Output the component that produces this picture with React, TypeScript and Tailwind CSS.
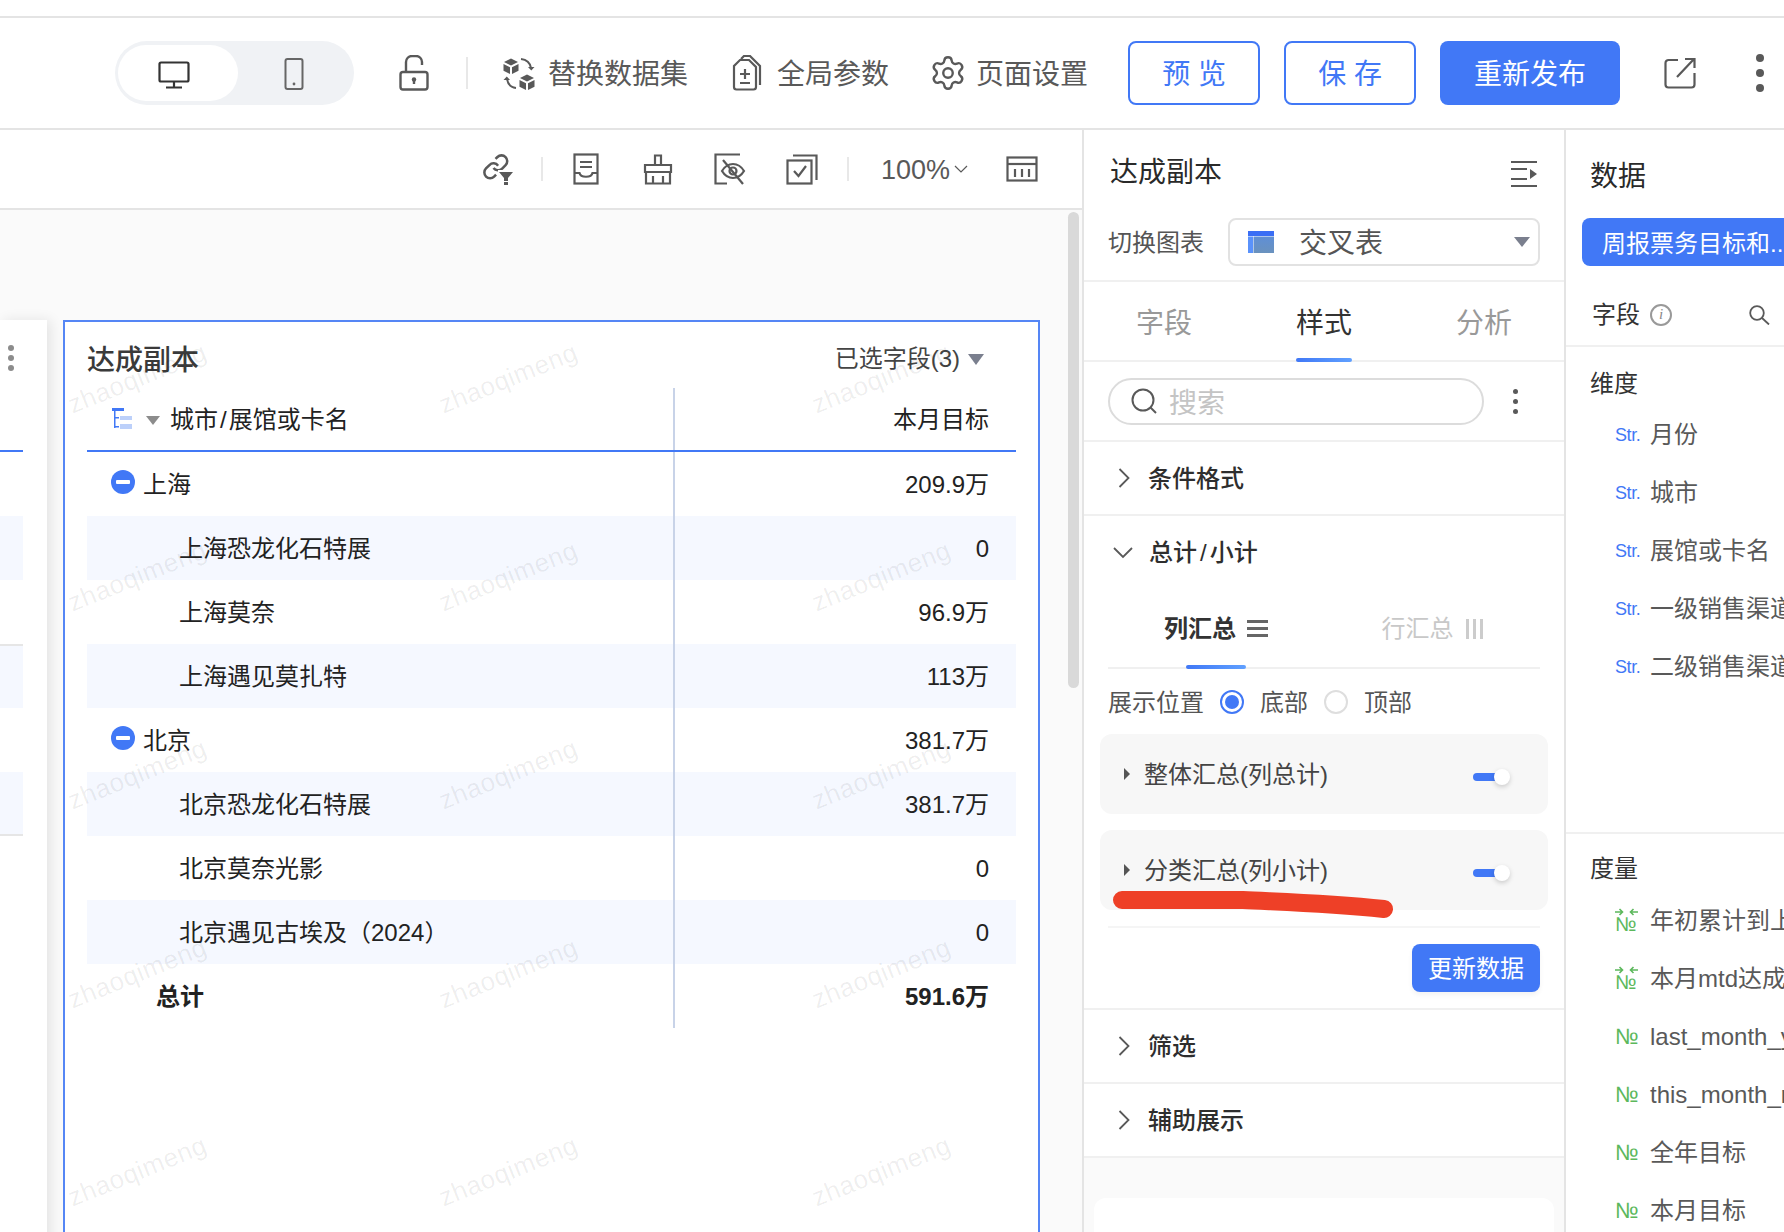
import { Settings } from "lucide-react";

const GRAY = "#595959";
const BLUE = "#4178f6";

const IconBase = ({ w, h, children, color = GRAY, sw = 2 }: { w: number; h: number; children: React.ReactNode; color?: string; sw?: number }) => (
  <svg width={w} height={h} viewBox={`0 0 ${w} ${h}`} fill="none" stroke={color} strokeWidth={sw} className="shrink-0">
    {children}
  </svg>
);

const DesktopIcon = () => (
  <IconBase w={32} h={28} color="#333" sw={2.2}>
    <rect x="1.5" y="1.5" width="29" height="19" rx="1.5" />
    <path d="M16 21v5M8 26.5h16" />
  </IconBase>
);

const MobileIcon = () => (
  <IconBase w={20} h={32} color="#666">
    <rect x="1.5" y="1" width="17" height="30" rx="2" />
    <circle cx="10" cy="26" r="1.4" fill="#666" stroke="none" />
  </IconBase>
);

const LockIcon = () => (
  <IconBase w={30} h={36} sw={2.4}>
    <path d="M7 17V7a6 6 0 0 1 6-6h4a6 6 0 0 1 6 6v3" />
    <rect x="1.5" y="17" width="27" height="17.5" rx="2.5" />
    <circle cx="15" cy="24.5" r="2.2" fill={GRAY} stroke="none" />
    <path d="M15 25v4" />
  </IconBase>
);

const SwapIcon = () => (
  <IconBase w={34} h={34}>
    <path d="M2 6l7-3.5L16 6l-7 3.5z" fill={GRAY} stroke="none" />
    <path d="M1.5 8l6.5 3.2V18l-6.5-3.2zM16.5 8L10 11.2V18l6.5-3.2z" fill={GRAY} stroke="none" />
    <path d="M19 3c5 .5 9 3.500 10 9" />
    <path d="M26 11l3.300 3.500L32.500 11" fill={GRAY} stroke="none" />
    <path d="M18 22l7-3.500L32 22l-7 3.500z" fill={GRAY} stroke="none" />
    <path d="M17.500 24l6.500 3.200V34l-6.500-3.200zM32.500 24L26 27.200V34l6.500-3.200z" fill={GRAY} stroke="none" />
    <path d="M14 32c-5-.5-8-3.500-9-9" />
    <path d="M1.500 24l3.300-3.500L8 24" fill={GRAY} stroke="none" />
  </IconBase>
);

const ParamIcon = () => (
  <IconBase w={30} h={36} sw={2.2}>
    <path d="M8 5h9l7 7v20a2.500 2.500 0 0 1-2.500 2.500h-17A2.500 2.500 0 0 1 2 32V11z" />
    <path d="M9 4l3-3h6l10 10v19" />
    <path d="M13 14v10M8 19h10M8 28h10" />
  </IconBase>
);

const ShareIcon = () => (
  <IconBase w={32} h={32} sw={2.2}>
    <path d="M14 3H4.500A3 3 0 0 0 1.500 6v21.500a3 3 0 0 0 3 3h23a3 3 0 0 0 3-3V16" />
    <path d="M13 20L30 2M21 2h9.500v9" />
  </IconBase>
);

const LinkFunnelIcon = () => (
  <svg width={31} height={31} viewBox="0 0 31 31" fill="none" stroke={GRAY} strokeWidth={2.2} className="shrink-0">
    <g transform="translate(-1 -1) scale(1.15)">
      <path d="M10 13a5 5 0 0 0 7.540.540l3-3a5 5 0 0 0-7.070-7.070l-1.720 1.710" />
      <path d="M14 11a5 5 0 0 0-7.540-.540l-3 3a5 5 0 0 0 7.070 7.070l1.710-1.710" />
    </g>
    <path d="M15 16h16v3h-16z" fill="#fff" stroke="none" />
    <path d="M16 18h14l-5 6v3h-4v-3z" fill={GRAY} stroke="none" />
    <path d="M21 28h4v3h-4z" fill={GRAY} stroke="none" />
  </svg>
);

const ReportIcon = () => (
  <IconBase w={26} h={32} sw={2.2}>
    <rect x="1.500" y="1.500" width="23" height="29" />
    <path d="M7 9h12M7 14h12M1.500 20h5c1 5 12 5 13 0h5" />
  </IconBase>
);

const BrushIcon = () => (
  <IconBase w={30} h={31} sw={2.2}>
    <path d="M12 11V1.500h6V11M2 11h26v7H2zM3 18v11.500h24V18M10 22v7.500M20 22v7.500" />
  </IconBase>
);

const EyeDocIcon = () => (
  <IconBase w={32} h={32} sw={2.2}>
    <path d="M26 1.500H1.500v29H13" />
    <path d="M8 18c3-5 7-7 11-7s8 2 11 7c-3 5-7 7-11 7s-8-2-11-7z" />
    <circle cx="19" cy="18" r="3.500" />
    <path d="M9 7l20 24" />
  </IconBase>
);

const CheckCopyIcon = () => (
  <IconBase w={32} h={31} sw={2.2}>
    <rect x="1.500" y="6.500" width="24" height="23" />
    <path d="M7 1.500h23.500V26" />
    <path d="M8 17l4.500 5L20 12" />
  </IconBase>
);

const TableIcon = () => (
  <IconBase w={32} h={26} sw={2.2}>
    <rect x="1.500" y="1.500" width="29" height="23" />
    <path d="M1.500 8h29" />
    <path d="M9 13v8M16 13v8M23 13v8" />
  </IconBase>
);

const CollapseIcon = () => (
  <IconBase w={26} h={26} sw={1.8}>
    <path d="M0 1h26M0 8h16M0 18h16M0 25h26" />
    <path d="M19 8l7 5-7 5z" fill={GRAY} stroke="none" />
  </IconBase>
);

const TreeIcon = () => (
  <svg width={20} height={21} viewBox="0 0 20 21" className="-mt-[4px] shrink-0">
    <rect x="0" y="0" width="12" height="3" fill={BLUE} />
    <rect x="2" y="3" width="1.500" height="17" fill={BLUE} />
    <rect x="3" y="9" width="4" height="1.500" fill={BLUE} />
    <rect x="3" y="18" width="4" height="1.500" fill={BLUE} />
    <rect x="8" y="8" width="12" height="4" fill="#bcd0fa" />
    <rect x="8" y="16" width="12" height="5" fill="#bcd0fa" />
  </svg>
);

const MinusCircle = () => (
  <svg width={24} height={24} viewBox="0 0 24 24" className="-mt-[6px] shrink-0">
    <circle cx="12" cy="12" r="12" fill={BLUE} />
    <rect x="5" y="10" width="14" height="4" rx="1" fill="#fff" />
  </svg>
);

const CrossTableIcon = () => (
  <svg width={26} height={22} viewBox="0 0 26 22" className="shrink-0">
    <defs>
      <linearGradient id="ct" x1="0" y1="0" x2="0" y2="1">
        <stop offset="0" stopColor="#5f8fd6" />
        <stop offset="1" stopColor="#6a92be" />
      </linearGradient>
    </defs>
    <rect x="0" y="0" width="26" height="5" fill="#3a6ef5" />
    <rect x="5.500" y="5.500" width="20.500" height="16.500" fill="url(#ct)" />
    <rect x="0" y="5.500" width="5" height="16.500" fill="#5a92fb" />
  </svg>
);

const Caret = ({ w, h, color }: { w: number; h: number; color: string }) => (
  <svg width={w} height={h} viewBox="0 0 10 6" preserveAspectRatio="none" className="shrink-0">
    <path d="M0 0h10L5 6z" fill={color} />
  </svg>
);

const CaretRight = () => (
  <svg width={6} height={12} viewBox="0 0 6 12" className="shrink-0">
    <path d="M0 0l6 6-6 6z" fill="#555" />
  </svg>
);

const ChevronRight = () => (
  <svg width={12} height={20} viewBox="0 0 12 20" fill="none" stroke={GRAY} strokeWidth={1.800} className="shrink-0">
    <path d="M1.500 1l9 9-9 9" />
  </svg>
);

const ChevronDown = () => (
  <svg width={20} height={12} viewBox="0 0 20 12" fill="none" stroke={GRAY} strokeWidth={1.800} className="shrink-0">
    <path d="M1 1l9 9 9-9" />
  </svg>
);

const Dots = ({ size, gap, color }: { size: string; gap: string; color: string }) => (
  <div className={`flex flex-col ${gap}`}>
    <span className={`block rounded-full ${size} ${color}`} />
    <span className={`block rounded-full ${size} ${color}`} />
    <span className={`block rounded-full ${size} ${color}`} />
  </div>
);

const SearchGlyph = () => (
  <svg width={26} height={26} viewBox="0 0 26 26" fill="none" stroke={GRAY} strokeWidth={2} className="shrink-0">
    <circle cx="12" cy="12" r="10.500" />
    <path d="M19.500 19.500l5.500 5.500" />
  </svg>
);

const SmallSearch = () => (
  <svg width={21} height={20} viewBox="0 0 21 20" fill="none" stroke={GRAY} strokeWidth={1.800} className="shrink-0">
    <circle cx="8" cy="8" r="6.800" />
    <path d="M13 13l7 6.500" />
  </svg>
);

const Toggle = () => (
  <div className="ml-auto mt-[6px] mr-[38px] flex items-center">
    <span className="block h-2 w-[24px] rounded-l-full bg-[#4178f6]" />
    <span className="-ml-[3px] block h-4 w-4 rounded-full bg-white shadow-[0_2px_5px_rgba(0,0,0,0.18)]" />
  </div>
);

const Section = ({ title }: { title: string }) => (
  <div className="flex h-[74px] items-center border-b-2 border-[#f0f0f0] pl-[34px]">
    <ChevronRight />
    <span className="ml-[18px] mt-[2px] text-[24px] font-medium text-[#2e2e2e]">{title}</span>
  </div>
);

const SummaryCard = ({ label, children }: { label: string; children?: React.ReactNode }) => (
  <div className="relative flex h-[80px] w-[448px] items-center rounded-xl bg-[#f7f7f7] pl-[24px]">
    <CaretRight />
    <span className="ml-[14px] mt-[2px] text-[24px] text-[#444]">{label}</span>
    <Toggle />
    {children}
  </div>
);

const tableRows = [
  { name: "上海", value: "209.9万", level: 1 },
  { name: "上海恐龙化石特展", value: "0", level: 2, striped: true },
  { name: "上海莫奈", value: "96.9万", level: 2 },
  { name: "上海遇见莫扎特", value: "113万", level: 2, striped: true },
  { name: "北京", value: "381.7万", level: 1 },
  { name: "北京恐龙化石特展", value: "381.7万", level: 2, striped: true },
  { name: "北京莫奈光影", value: "0", level: 2 },
  { name: "北京遇见古埃及（2024）", value: "0", level: 2, striped: true },
  { name: "总计", value: "591.6万", level: 0 },
];

const TableRow = ({ row }: { row: (typeof tableRows)[number] }) => (
  <div className={`flex h-[64px] items-center ${row.striped ? "bg-[#f5f8ff]" : ""}`}>
    <div className="flex h-full w-[588px] items-center border-r-2 border-[#c8d3e8] pt-[2px]">
      {row.level === 1 && (
        <div className="flex items-center pl-[24px]">
          <MinusCircle />
          <span className="ml-[8px] text-[24px] text-[#222]">{row.name}</span>
        </div>
      )}
      {row.level === 2 && <span className="pl-[92px] text-[24px] text-[#222]">{row.name}</span>}
      {row.level === 0 && <span className="pl-[69px] text-[24px] font-bold text-[#222]">{row.name}</span>}
    </div>
    <div className={`flex-1 pr-[27px] pt-[2px] text-right text-[24px] text-[#222] ${row.level === 0 ? "font-bold" : ""}`}>{row.value}</div>
  </div>
);

const wmX = [-1, 370, 743];
const wmY = [15, 213, 411, 610, 808];

const Watermarks = () => (
  <div className="pointer-events-none absolute inset-0 overflow-hidden">
    {wmY.map((y) =>
      wmX.map((x) => (
        <span
          key={`${x}-${y}`}
          className="absolute origin-center -rotate-[22deg] whitespace-nowrap text-[26px] tracking-[0.5px] text-black/[0.07]"
          style={{ left: x, top: y + 22 }}
        >
          zhaoqimeng
        </span>
      )),
    )}
  </div>
);

const FieldRow = ({ type, name }: { type: "str" | "num" | "calc"; name: string }) => (
  <div className="flex h-[58px] items-center whitespace-nowrap pl-[49px] pt-[2px]">
    <div className="relative w-[35px] shrink-0">
      {type === "str" && <span className="text-[18px] tracking-[-0.4px] text-[#4178f6]">Str.</span>}
      {type === "num" && <span className="text-[22px] leading-[26px] tracking-[-0.5px] text-[#5cb85c]">№</span>}
      {type === "calc" && (
        <>
          <span className="relative top-[3px] text-[20px] leading-[26px] tracking-[-0.5px] text-[#5cb85c]">№</span>
          <svg width={23} height={8} viewBox="0 0 23 8" fill="none" stroke="#5cb85c" strokeWidth={1.600} className="absolute top-0 left-0">
            <path d="M0 4h7M4.500 1l3 3-3 3M23 4h-7M18.500 1l-3 3 3 3" />
          </svg>
        </>
      )}
    </div>
    <span className="text-[24px] text-[#595959]">{name}</span>
  </div>
);

export default function App() {
  return (
    <div className="h-[1232px] w-[1784px] overflow-hidden bg-white font-['Liberation_Sans','Noto_Sans_CJK_SC',sans-serif]">
      {/* top strip */}
      <div className="h-[18px] border-b-2 border-[#e4e4e4]" />

      {/* main header */}
      <div className="flex h-[112px] items-center border-b-2 border-[#e4e4e4] pl-[115px] text-[28px] text-[#595959]">
        <div className="flex h-[64px] w-[239px] items-center rounded-full bg-[#f0f2f5] pl-[3px]">
          <div className="flex h-[56px] w-[120px] items-center justify-center rounded-full bg-white pr-[8px] pt-[4px]">
            <DesktopIcon />
          </div>
          <div className="flex flex-1 items-center justify-center pr-[4px] pt-[2px]">
            <MobileIcon />
          </div>
        </div>
        <div className="ml-[45px]">
          <LockIcon />
        </div>
        <div className="ml-[37px] h-[32px] w-[2px] bg-[#e8e8e8]" />
        <div className="ml-[34px]">
          <SwapIcon />
        </div>
        <span className="ml-[12px] mt-[4px] whitespace-nowrap">替换数据集</span>
        <div className="ml-[44px]">
          <ParamIcon />
        </div>
        <span className="ml-[15px] mt-[4px] whitespace-nowrap">全局参数</span>
        <Settings size={38} strokeWidth={1.500} color={GRAY} className="ml-[40px] shrink-0" />
        <span className="ml-[9px] mt-[4px] whitespace-nowrap">页面设置</span>
        <button className="ml-[40px] h-[64px] w-[132px] rounded-lg border-2 border-[#4178f6] pt-[3px] text-[28px] text-[#4178f6]">预 览</button>
        <button className="ml-[24px] h-[64px] w-[132px] rounded-lg border-2 border-[#4178f6] pt-[3px] text-[28px] text-[#4178f6]">保 存</button>
        <button className="ml-[24px] h-[64px] w-[180px] rounded-lg bg-[#4178f6] pt-[3px] text-[28px] text-white">重新发布</button>
        <div className="ml-[44px]">
          <ShareIcon />
        </div>
        <div className="ml-[60px]">
          <Dots size="h-2 w-2" gap="gap-[7px]" color="bg-[#595959]" />
        </div>
      </div>

      <div className="flex h-[1102px]">
        {/* canvas */}
        <div className="flex w-[1082px] shrink-0 flex-col">
          <div className="flex h-[80px] shrink-0 items-center border-b-2 border-[#e4e4e4] pl-[483px] text-[#595959]">
            <LinkFunnelIcon />
            <div className="ml-[27px] h-[24px] w-[2px] bg-[#e8e8e8]" />
            <div className="ml-[30px]"><ReportIcon /></div>
            <div className="ml-[44px]"><BrushIcon /></div>
            <div className="ml-[41px]"><EyeDocIcon /></div>
            <div className="ml-[40px]"><CheckCopyIcon /></div>
            <div className="ml-[29px] h-[24px] w-[2px] bg-[#e8e8e8]" />
            <span className="ml-[32px] mt-[2px] w-[67px] whitespace-nowrap text-[27px]">100%</span>
            <svg width={14} height={8} viewBox="0 0 14 8" fill="none" stroke={GRAY} strokeWidth={1.200} className="ml-[6px] shrink-0">
              <path d="M1 1l6 6 6-6" />
            </svg>
            <div className="ml-[38px]"><TableIcon /></div>
          </div>

          <div className="relative flex min-h-0 flex-1 items-start overflow-hidden bg-[#fafafa] pt-[110px]">
            {/* neighbouring chart, cut off by the viewport */}
            <div className="h-[1100px] w-[47px] shrink-0 bg-white pt-[25px] shadow-[4px_0_12px_rgba(0,0,0,0.09)]">
              <div className="ml-[8px]">
                <Dots size="h-[6px] w-[6px]" gap="gap-[4px]" color="bg-[#8c8c8c]" />
              </div>
              <div className="mt-[79px] w-[23px]">
                <div className="h-[66px] border-t-2 border-[#4178f6]" />
                <div className="h-[64px] bg-[#f5f8ff]" />
                <div className="h-[64px]" />
                <div className="h-[64px] border-t-2 border-[#e6e6e6] bg-[#f5f8ff]" />
                <div className="h-[64px]" />
                <div className="h-[64px] border-b-2 border-[#e6e6e6] bg-[#f5f8ff]" />
              </div>
            </div>

            <div className="relative ml-[16px] h-[1100px] w-[977px] shrink-0 border-2 border-[#5586f5] bg-white pl-[22px] pr-[22px]">
              <div className="flex h-[66px] items-center justify-between pt-[8px]">
                <span className="mt-[4px] text-[28px] font-medium text-[#3a3a3a]">达成副本</span>
                <div className="flex items-center pr-[32px]">
                  <span className="text-[24px] text-[#444]">已选字段(3)</span>
                  <span className="ml-[8px]">
                    <Caret w={16} h={11} color="#7a7f8e" />
                  </span>
                </div>
              </div>
              <div className="flex h-[64px] items-center border-b-2 border-[#4178f6]">
                <div className="flex h-full w-[588px] items-center border-r-2 border-[#c8d3e8] pl-[25px] pt-[2px]">
                  <TreeIcon />
                  <span className="ml-[14px]">
                    <Caret w={14} h={9} color="#8c8c8c" />
                  </span>
                  <span className="ml-[10px] text-[24px] text-[#222]">
                    城市<span className="mx-[2px]">/</span>展馆或卡名
                  </span>
                </div>
                <div className="flex-1 pr-[27px] pt-[2px] text-right text-[24px] text-[#222]">本月目标</div>
              </div>
              {tableRows.map((row) => (
                <TableRow key={row.name} row={row} />
              ))}
              <Watermarks />
            </div>

            <div className="absolute right-[3px] top-[2px] h-[476px] w-[11px] rounded-full bg-[#d9d9d9]" />
          </div>
        </div>

        {/* chart settings panel */}
        <div className="flex w-[482px] shrink-0 flex-col border-l-2 border-[#e4e4e4]">
          <div className="h-[152px] shrink-0 border-b-2 border-[#f0f0f0] px-[24px]">
            <div className="mt-[24px] flex h-[34px] items-center justify-between pr-[3px]">
              <span className="ml-[2px] mt-[4px] text-[28px] text-[#2a2a2a]">达成副本</span>
              <span className="mt-[6px]"><CollapseIcon /></span>
            </div>
            <div className="mt-[30px] flex items-center">
              <span className="mt-[2px] text-[24px] text-[#555]">切换图表</span>
              <div className="ml-[24px] flex h-[48px] w-[312px] items-center rounded-lg border-2 border-[#e2e2e2] pl-[18px] pr-[8px]">
                <CrossTableIcon />
                <span className="ml-[25px] mt-[4px] text-[28px] leading-none text-[#555]">交叉表</span>
                <span className="ml-auto">
                  <Caret w={16} h={10} color="#7a7f8e" />
                </span>
              </div>
            </div>
          </div>

          <div className="flex h-[80px] shrink-0 border-b-2 border-[#f0f0f0] text-[28px]">
            <div className="flex flex-1 items-center justify-center pt-[6px] text-[#999]">字段</div>
            <div className="relative flex flex-1 items-center justify-center pt-[6px] text-[#333]">
              样式
              <span className="absolute -bottom-[2px] left-1/2 h-[4px] w-[56px] -translate-x-1/2 rounded-full bg-gradient-to-r from-[#4178f6] to-[#60a0ff]" />
            </div>
            <div className="flex flex-1 items-center justify-center pt-[6px] text-[#999]">分析</div>
          </div>

          <div className="flex h-[80px] shrink-0 items-center border-b-2 border-[#f0f0f0] pl-[24px]">
            <div className="flex h-[47px] w-[376px] items-center rounded-full border-2 border-[#dcdcdc] pl-[21px]">
              <SearchGlyph />
              <span className="ml-[12px] mt-[5px] text-[28px] text-[#c4c4c4]">搜索</span>
            </div>
            <div className="ml-[29px]">
              <Dots size="h-[5px] w-[5px]" gap="gap-[5px]" color="bg-[#595959]" />
            </div>
          </div>

          <Section title="条件格式" />

          <div className="shrink-0 border-b-2 border-[#f0f0f0]">
            <div className="flex h-[74px] items-center pl-[29px]">
              <ChevronDown />
              <span className="ml-[16px] text-[24px] font-medium text-[#2e2e2e]">
                总计<span className="mx-[3px]">/</span>小计
              </span>
            </div>
            <div className="ml-[24px] flex h-[79px] w-[432px] border-b-2 border-[#f0f0f0]">
              <div className="relative flex flex-1 items-center justify-center">
                <span className="text-[24px] font-bold text-[#333]">列汇总</span>
                <span className="ml-[11px] flex flex-col gap-[4px]">
                  <span className="block h-[3px] w-[21px] bg-[#666]" />
                  <span className="block h-[3px] w-[21px] bg-[#666]" />
                  <span className="block h-[3px] w-[21px] bg-[#666]" />
                </span>
                <span className="absolute -bottom-[2px] left-1/2 h-[4px] w-[60px] -translate-x-1/2 rounded-full bg-gradient-to-r from-[#4178f6] to-[#60a0ff]" />
              </div>
              <div className="flex flex-1 items-center justify-center">
                <span className="text-[24px] text-[#c8c8c8]">行汇总</span>
                <span className="ml-[12px] flex gap-[4px]">
                  <span className="block h-[20px] w-[3px] bg-[#ccc]" />
                  <span className="block h-[20px] w-[3px] bg-[#ccc]" />
                  <span className="block h-[20px] w-[3px] bg-[#ccc]" />
                </span>
              </div>
            </div>
            <div className="flex h-[65px] items-center pl-[24px] text-[24px] text-[#555]">
              <span className="mt-[2px]">展示位置</span>
              <span className="ml-[16px] flex h-[24px] w-[24px] items-center justify-center rounded-full border-2 border-[#4178f6]">
                <span className="block h-[14px] w-[14px] rounded-full bg-[#4178f6]" />
              </span>
              <span className="ml-[16px] mt-[2px]">底部</span>
              <span className="ml-[16px] block h-[24px] w-[24px] rounded-full border-2 border-[#dedede]" />
              <span className="ml-[16px] mt-[2px]">顶部</span>
            </div>
            <div className="ml-[16px] flex flex-col gap-[16px]">
              <SummaryCard label="整体汇总(列总计)" />
              <SummaryCard label="分类汇总(列小计)">
                <svg width={280} height={27} viewBox="0 0 280 27" fill="none" className="absolute left-[13px] top-[61px] overflow-visible">
                  <path d="M9 9L130 9C170 11 215 12 271 18" stroke="#ee4027" strokeWidth={18} strokeLinecap="round" />
                </svg>
              </SummaryCard>
            </div>
            <div className="ml-[24px] mt-[16px] w-[432px] border-t-2 border-[#f5f5f5]" />
            <div className="flex justify-end py-[16px] pr-[24px]">
              <button className="h-[48px] w-[128px] rounded-lg bg-[#4178f6] pt-[2px] text-[24px] text-white shadow-[0_3px_5px_rgba(0,0,0,0.05)]">更新数据</button>
            </div>
          </div>

          <Section title="筛选" />
          <Section title="辅助展示" />

          <div className="min-h-0 flex-1 bg-[#fafafa] px-[10px] pt-[40px]">
            <div className="h-full rounded-t-xl bg-white" />
          </div>
        </div>

        {/* data panel */}
        <div className="min-w-0 flex-1 overflow-hidden border-l-2 border-[#e4e4e4]">
          <div className="flex h-[88px] items-center pl-[24px] pt-[5px] text-[28px] text-[#2a2a2a]">数据</div>
          <div className="ml-[16px] flex h-[48px] w-[230px] items-center whitespace-nowrap rounded-l-lg bg-[#4178f6] pl-[20px] pt-[4px] text-[24px] text-white">周报票务目标和...</div>
          <div className="flex h-[81px] items-center border-b-2 border-[#f0f0f0] pl-[26px] pr-[14px] pt-[18px]">
            <span className="text-[24px] text-[#333]">字段</span>
            <span className="ml-[10px] flex h-[22px] w-[22px] items-center justify-center rounded-full border-2 border-[#999] font-['Liberation_Serif',serif] text-[15px] italic leading-none text-[#888]">i</span>
            <span className="ml-auto"><SmallSearch /></span>
          </div>
          <div className="flex h-[58px] items-end pb-[3px] pl-[24px] text-[24px] text-[#333]">维度</div>
          <FieldRow type="str" name="月份" />
          <FieldRow type="str" name="城市" />
          <FieldRow type="str" name="展馆或卡名" />
          <FieldRow type="str" name="一级销售渠道" />
          <FieldRow type="str" name="二级销售渠道" />
          <div className="mt-[137px] flex h-[59px] items-end border-t-2 border-[#f0f0f0] pb-[4px] pl-[24px] text-[24px] text-[#333]">度量</div>
          <FieldRow type="calc" name="年初累计到上月达成" />
          <FieldRow type="calc" name="本月mtd达成率" />
          <FieldRow type="num" name="last_month_ytd" />
          <FieldRow type="num" name="this_month_mtd" />
          <FieldRow type="num" name="全年目标" />
          <FieldRow type="num" name="本月目标" />
        </div>
      </div>
    </div>
  );
}
